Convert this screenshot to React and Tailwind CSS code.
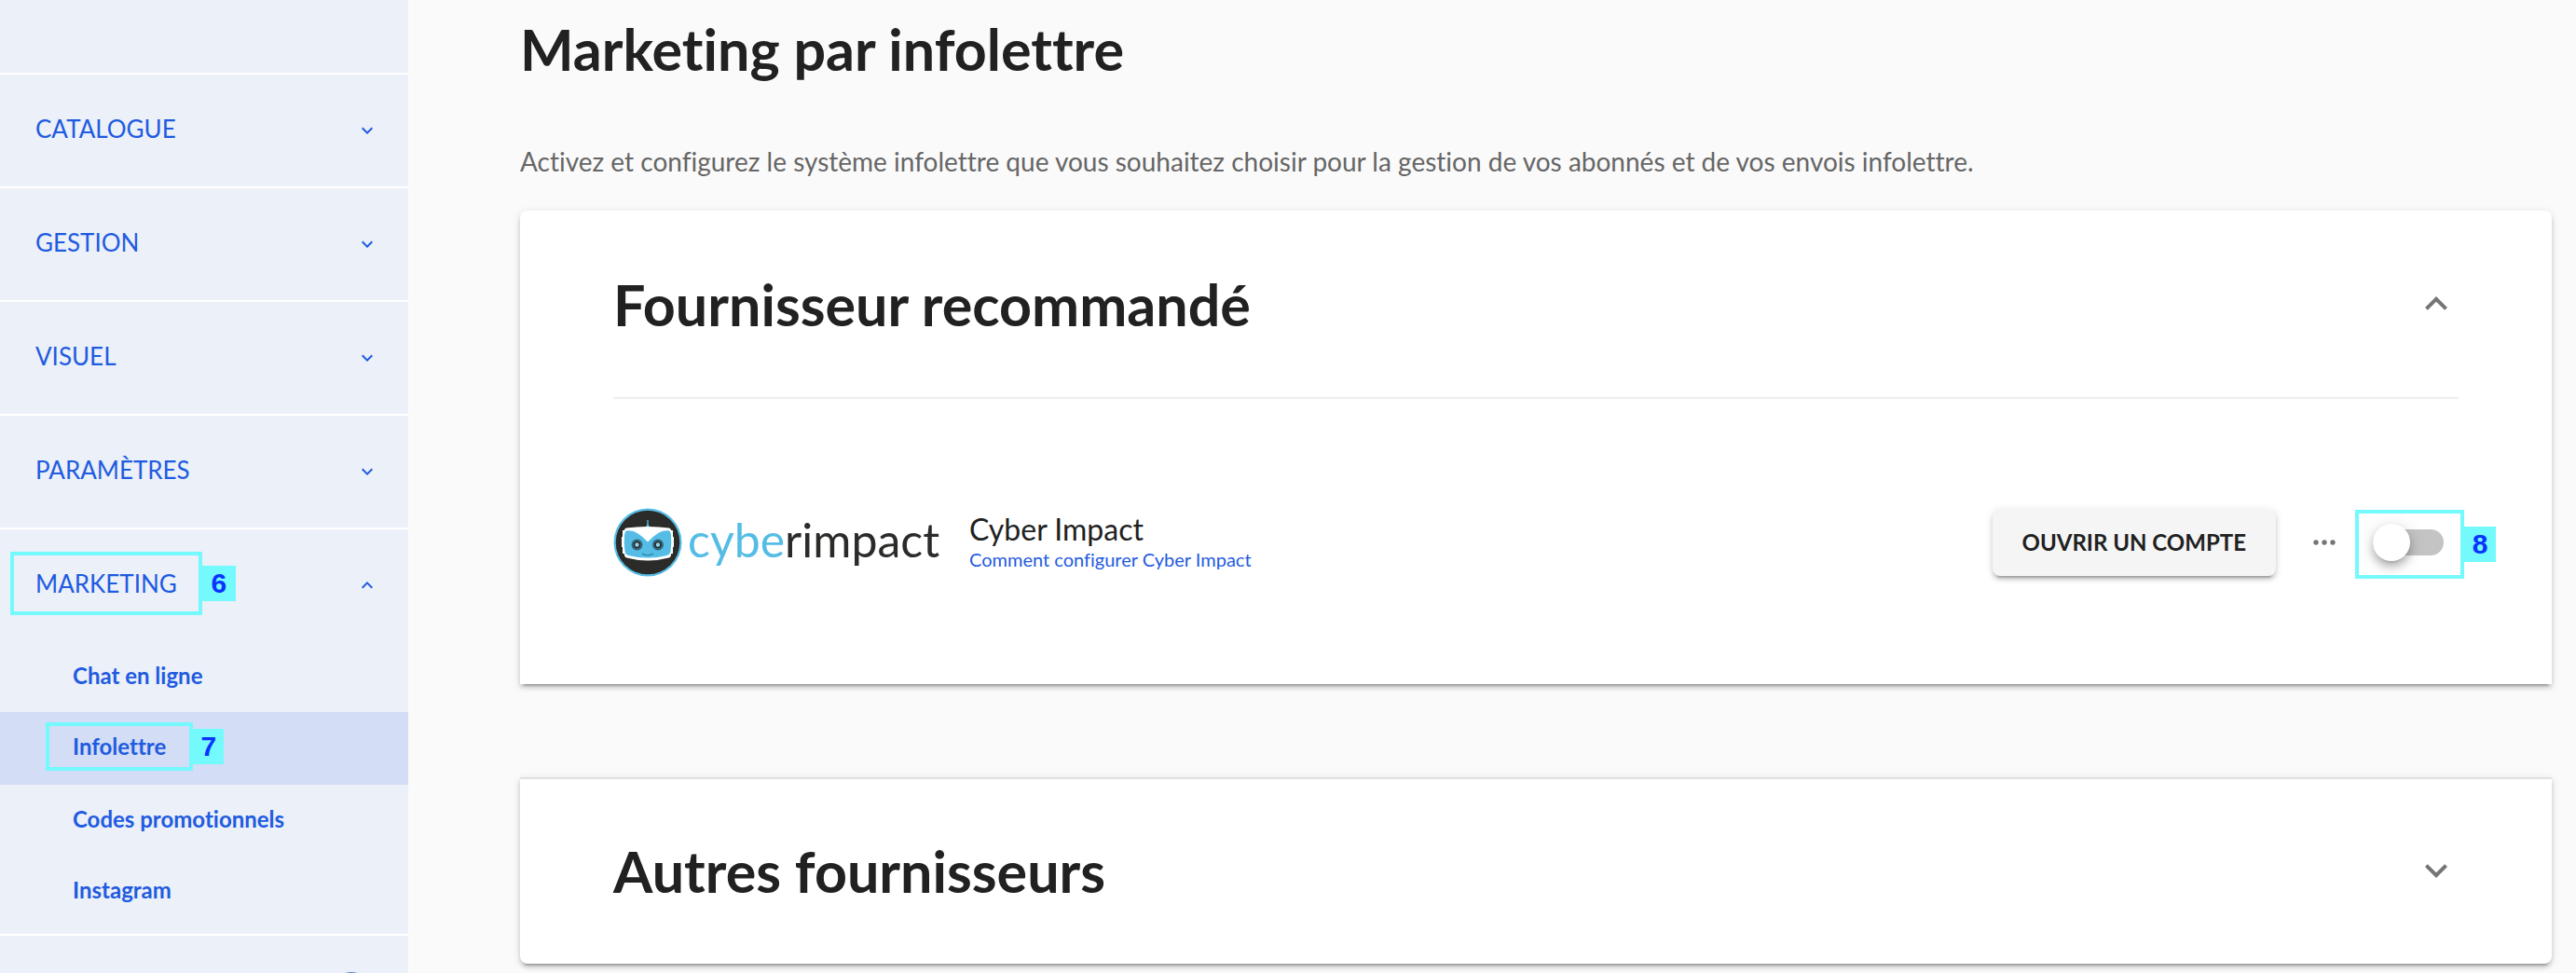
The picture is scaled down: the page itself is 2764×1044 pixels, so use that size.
import React, { useState } from "react";

const EXPAND_MORE = "M16.59 8.59L12 13.17 7.41 8.59 6 10l6 6 6-6z";
const EXPAND_LESS = "M12 8l-6 6 1.41 1.41L12 10.83l4.59 4.58L18 14z";

function Chevron({ up, className }) {
  return (
    <svg viewBox="0 0 24 24" fill="currentColor" className={className} aria-hidden="true">
      <path d={up ? EXPAND_LESS : EXPAND_MORE} />
    </svg>
  );
}

function StepBadge({ children, className = "w-9" }) {
  return (
    <span
      className={`absolute left-full top-1/2 ml-1 flex h-[38px] -translate-y-1/2 items-center justify-center bg-[#74f9fd] text-[30px] font-bold leading-none text-[#0a33ff] [font-family:'Liberation_Sans',Arial,sans-serif] ${className}`}
    >
      {children}
    </span>
  );
}

const sections = ["CATALOGUE", "GESTION", "VISUEL", "PARAMÈTRES"];

function SectionButton({ label, open, step }) {
  return (
    <button
      type="button"
      aria-expanded={!!open}
      className="flex h-[120px] w-full items-center justify-between pl-[38px] pr-8 text-[26px] leading-8"
    >
      <span className="relative mb-1">
        {label}
        {step && (
          <span className="absolute -inset-x-[27px] -inset-y-[18px] border-4 border-[#74f9fd]">
            <StepBadge>{step}</StepBadge>
          </span>
        )}
      </span>
      <Chevron up={open} className="size-6" />
    </button>
  );
}

function SubLink({ label, active, step }) {
  return (
    <a
      href="#"
      aria-current={active ? "page" : undefined}
      className={`flex items-center pl-[78px] text-2xl font-bold ${active ? "h-[78px] bg-[#d3ddf5] pb-1" : "h-[76px] pb-0.5"}`}
    >
      <span className="relative">
        {label}
        {step && (
          <span className="absolute -inset-x-[29px] -inset-y-[10px] border-4 border-[#74f9fd]">
            <StepBadge className="w-[33px]">{step}</StepBadge>
          </span>
        )}
      </span>
    </a>
  );
}

function Sidebar() {
  return (
    <nav className="w-[438px] shrink-0 bg-[#ebf0f9] text-[#1f5be0]">
      <div className="h-[78px]" />
      {sections.map((s) => (
        <div key={s} className="border-t-2 border-white">
          <SectionButton label={s} />
        </div>
      ))}
      <div className="border-t-2 border-white pb-2">
        <SectionButton label="MARKETING" open step="6" />
        <SubLink label="Chat en ligne" />
        <SubLink label="Infolettre" active step="7" />
        <SubLink label="Codes promotionnels" />
        <SubLink label="Instagram" />
      </div>
      <div className="flex h-[122px] items-center justify-end border-t-2 border-white pr-10">
        <svg viewBox="0 0 42 42" className="size-[42px]" aria-hidden="true">
          <circle cx="21" cy="21" r="21" fill="#5b7bd0" />
        </svg>
      </div>
    </nav>
  );
}

function CyberLogo() {
  return (
    <div className="flex w-[350px] items-center gap-1.5">
      <svg viewBox="0 0 74 74" className="size-[74px] shrink-0" aria-hidden="true">
        <circle cx="37" cy="37" r="36.5" fill="#55bde5" />
        <circle cx="37" cy="37" r="34.3" fill="#2b2b29" />
        <path d="M36.3 13h1.4v4.500l1.800 4h-5l1.800-4z" fill="#55bde5" />
        <path
          d="M14 21.500q11-1.500 23-1.500t23 1.500q2 .5 2.200 2.500h1.800v7h1v11h-1v7h-1.800q-.2 4-2.700 4.500-11 3-22.500 3t-22.500-3q-2.500-.5-2.700-4.500h-1.800v-7h-1v-11h1v-7h1.800q.2-2 2.200-2.500z"
          fill="#fff"
        />
        <path
          d="M14 24.500q10-2.500 23 12 13-14.500 23-12 1.500.5 2 5 .8 8-.5 17-.5 3.500-4 4.500-10 2.500-20.500 2.500t-20.500-2.500q-3.500-1-4-4.500-1.300-9-.5-17 .5-4.500 2-5z"
          fill="#55bde5"
        />
        <g fill="#55bde5" stroke="#29627b" strokeWidth="1.500">
          <circle cx="25.500" cy="39.500" r="5.200" />
          <circle cx="48" cy="39.500" r="5.200" />
        </g>
        <g fill="#8fd4ee" stroke="#2b2b29" strokeWidth="2">
          <circle cx="25.500" cy="39.500" r="3.200" />
          <circle cx="48" cy="39.500" r="3.200" />
        </g>
        <path d="M31 49q6 3.500 12 0" fill="none" stroke="#2b7fa0" strokeWidth="1.200" />
      </svg>
      <span className="pb-1.5 text-[50px] leading-[66px] text-[#2b2b29]">
        <span className="text-[#55bde5]">cybe</span>rimpact
      </span>
    </div>
  );
}

function PanelHeader({ title, open }) {
  return (
    <h2>
      <button
        type="button"
        aria-expanded={open}
        className="flex h-[198px] w-full items-center justify-between text-left text-[61px] font-bold leading-[72px]"
      >
        {title}
        <Chevron up={open} className="mb-0.5 size-12 text-[#757575]" />
      </button>
    </h2>
  );
}

const PANEL =
  "bg-white px-[100px] shadow-[0_6px_2px_-4px_rgba(0,0,0,0.2),0_4px_4px_0_rgba(0,0,0,0.14),0_2px_10px_0_rgba(0,0,0,0.12)]";

export default function App() {
  const [on, setOn] = useState(false);
  return (
    <div className="flex h-screen overflow-hidden bg-[#fafafa] font-['Lato',sans-serif] text-[#212121] [font-variant-ligatures:none]">
      <Sidebar />
      <main className="min-w-0 flex-1 pl-[120px] pr-[26px]">
        <h1 className="pt-[17px] text-[61px] font-bold leading-[72px]">Marketing par infolettre</h1>
        <p className="mb-[35px] mt-[66px] text-[28px] leading-9 text-[#666]">
          Activez et configurez le système infolettre que vous souhaitez choisir pour la gestion de vos abonnés et de vos
          envois infolettre.
        </p>

        <section className={`${PANEL} rounded-t-lg pb-[115px] pt-0.5`}>
          <PanelHeader title="Fournisseur recommandé" open />
          <div className="flex items-center border-t-2 border-[#eee] pt-[117px]">
            <CyberLogo />
            <div className="ml-8 flex-1">
              <div className="text-[32px] leading-9">Cyber Impact</div>
              <a href="#" className="block text-xl leading-7 text-[#1f5be0]">
                Comment configurer Cyber Impact
              </a>
            </div>
            <button
              type="button"
              className="h-[72px] rounded-lg bg-[#f5f5f5] px-8 text-2xl font-bold shadow-[0_6px_2px_-4px_rgba(0,0,0,0.2),0_4px_4px_0_rgba(0,0,0,0.14),0_2px_10px_0_rgba(0,0,0,0.12)]"
            >
              OUVRIR UN COMPTE
            </button>
            <button type="button" aria-label="Plus d'options" className="ml-[34px] text-[#757575]">
              <svg viewBox="0 0 36 36" fill="currentColor" className="size-9" aria-hidden="true">
                <circle cx="9" cy="18" r="2.700" />
                <circle cx="18" cy="18" r="2.700" />
                <circle cx="27" cy="18" r="2.700" />
              </svg>
            </button>
            <label className="relative ml-[34px] mr-4 block h-10 w-[76px]">
              <input
                type="checkbox"
                role="switch"
                aria-label="Activer Cyber Impact"
                checked={on}
                onChange={(e) => setOn(e.target.checked)}
                className="peer absolute inset-x-0 top-1.5 h-7 w-full appearance-none rounded-full bg-[#c4c4c4]"
              />
              <span className="absolute left-0 top-0 size-10 rounded-full bg-white shadow-[0_6px_2px_-4px_rgba(0,0,0,0.1),0_6px_10px_0_rgba(0,0,0,0.25),0_2px_20px_0_rgba(0,0,0,0.12)] peer-checked:left-9" />
              <span className="absolute -left-[19px] -right-[22px] -top-[15px] h-[74px] border-4 border-[#74f9fd]">
                <StepBadge className="w-[34px]">8</StepBadge>
              </span>
            </label>
          </div>
        </section>

        <section className={`${PANEL} mt-[100px] rounded-b-lg border-t-2 border-[#e0e0e0]`}>
          <PanelHeader title="Autres fournisseurs" open={false} />
        </section>
      </main>
    </div>
  );
}
